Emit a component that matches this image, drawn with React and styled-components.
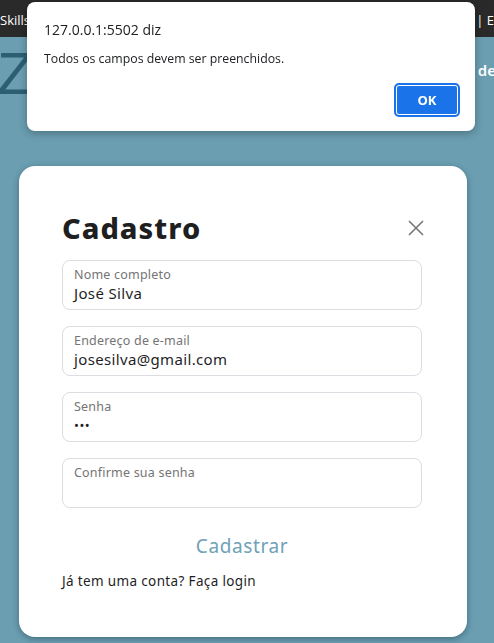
import React from "react";
import styled, { createGlobalStyle } from "styled-components";

const colors = {
    page: "#6b9eb1",
    bar: "#2a2a2a",
    accent: "#6fa1b8",
    ink: "#1f1f1f",
    muted: "#747474",
    line: "#dcdde3",
};

const FIELDS = [
    { id: 1, label: "Nome completo", value: "José Silva" },
    { id: 2, label: "Endereço de e-mail", value: "josesilva@gmail.com" },
    { id: 3, label: "Senha", value: "•••", secret: true },
    { id: 4, label: "Confirme sua senha", value: "" },
];

const App = () => {
    return (
        <>
            <GlobalStyle />
            <TopBar>
                <BarText>Skills</BarText>
                <BarText>l | E</BarText>
            </TopBar>
            <Hero>
                <Logo>ZE</Logo>
                <NavLink>de</NavLink>
            </Hero>
            <Card>
                <CardHeader>
                    <CardTitle>Cadastro</CardTitle>
                    <CloseBtn aria-label="Fechar">
                        <svg width="16" height="16" viewBox="0 0 16 16">
                            <path d="M1 1 L15 15 M15 1 L1 15" stroke="#777" strokeWidth="1.6" fill="none" />
                        </svg>
                    </CloseBtn>
                </CardHeader>
                <Fields>
                    {FIELDS.map(item => (
                        <Field key={item.id}>
                            <FieldLabel>{item.label}</FieldLabel>
                            <FieldValue secret={item.secret}>{item.value}</FieldValue>
                        </Field>
                    ))}
                </Fields>
                <SubmitBtn>Cadastrar</SubmitBtn>
                <LoginText>Já tem uma conta? Faça login</LoginText>
            </Card>

            <Alert>
                <AlertTitle>127.0.0.1:5502 diz</AlertTitle>
                <AlertMessage>Todos os campos devem ser preenchidos.</AlertMessage>
                <AlertActions>
                    <OkBtn>OK</OkBtn>
                </AlertActions>
            </Alert>
        </>
    );
};

const GlobalStyle = createGlobalStyle`
    html, body {
        margin: 0;
        padding: 0;
        background-color: ${colors.page};
        height: 100%;
        overflow: hidden;
    }
    body {
        font-family: "Noto Sans", "Open Sans", sans-serif;
    }
`;

export const TopBar = styled.div`
    height: 37px;
    background-color: ${colors.bar};
    display: flex;
    justify-content: space-between;
    align-items: center;
    box-sizing: border-box;
`;
export const BarText = styled.span`
    font-family: "Open Sans", sans-serif;
    font-size: 13px;
    color: #fff;
    margin-top: 2px;
`;
export const Hero = styled.div`
    height: 129px;
    display: flex;
    justify-content: space-between;
    align-items: flex-start;
    overflow: hidden;
`;
export const Logo = styled.h1`
    margin: 7px 0 0 -3px;
    font-family: "Liberation Sans", sans-serif;
    font-weight: 400;
    font-size: 60px;
    letter-spacing: 2px;
    color: #2c5f74;
    line-height: 1;
`;
export const NavLink = styled.a`
    margin-top: 23px;
    font-family: "Noto Sans", sans-serif;
    font-weight: 600;
    font-size: 15px;
    color: #fff;
    margin-right: -2px;
`;

export const Card = styled.div`
    width: 448px;
    margin-left: 19px;
    background-color: #fff;
    border-radius: 16px;
    box-shadow: 0 2px 6px rgba(20, 50, 65, 0.45);
    padding: 40px 45px 47px 43px;
    box-sizing: border-box;
`;
export const CardHeader = styled.div`
    display: flex;
    justify-content: space-between;
    align-items: center;
    height: 42px;
    margin-bottom: 12px;
`;
export const CardTitle = styled.h2`
    margin: 0;
    font-family: "Noto Sans", sans-serif;
    font-weight: 800;
    font-size: 29px;
    letter-spacing: 1px;
    color: ${colors.ink};
`;
export const CloseBtn = styled.button`
    border: none;
    background: none;
    padding: 0;
    margin-right: -2px;
    margin-top: 2px;
    display: flex;
    cursor: pointer;
`;
export const Fields = styled.div`
    display: flex;
    flex-direction: column;
    gap: 16px;
`;
export const Field = styled.div`
    height: 50px;
    border: 1px solid ${colors.line};
    border-radius: 8px;
    padding: 5px 11px;
    box-sizing: border-box;
`;
export const FieldLabel = styled.div`
    font-family: "Noto Sans", sans-serif;
    font-size: 12.5px;
    line-height: 17px;
    letter-spacing: 0.2px;
    color: ${colors.muted};
`;
export const FieldValue = styled.div`
    font-family: "Noto Sans", sans-serif;
    font-size: ${props => (props.secret ? "13px" : "15px")};
    line-height: 20px;
    color: ${colors.ink};
    letter-spacing: ${props => (props.secret ? "0.5px" : "0.35px")};
`;
export const SubmitBtn = styled.button`
    display: block;
    margin: 18px auto 0;
    height: 40px;
    padding: 0 20px;
    border: none;
    background: none;
    font-family: "Noto Sans", sans-serif;
    font-size: 19px;
    letter-spacing: 0.6px;
    color: ${colors.accent};
    cursor: pointer;
`;
export const LoginText = styled.p`
    margin: 6px 0 0;
    font-family: "Noto Sans", sans-serif;
    font-size: 13.5px;
    letter-spacing: 0.35px;
    color: ${colors.ink};
`;

export const Alert = styled.div`
    position: fixed;
    top: 2px;
    left: 27px;
    width: 448px;
    height: 129px;
    box-sizing: border-box;
    background-color: #fff;
    border-radius: 8px;
    box-shadow: 0 2px 8px rgba(0, 0, 0, 0.3);
    padding: 19px 16px 15px 17px;
    display: flex;
    flex-direction: column;
    font-family: "Open Sans", sans-serif;
`;
export const AlertTitle = styled.div`
    font-size: 14px;
    line-height: 18px;
    color: #202124;
`;
export const AlertMessage = styled.div`
    margin-top: 12px;
    font-size: 12.3px;
    line-height: 16px;
    color: #202124;
`;
export const AlertActions = styled.div`
    margin-top: auto;
    display: flex;
    justify-content: flex-end;
`;
export const OkBtn = styled.button`
    width: 64px;
    height: 32px;
    border-radius: 4px;
    border: 1px solid #fff;
    outline: 2px solid #1a73e8;
    outline-offset: -1px;
    box-shadow: inset 0 0 0 1px #fff;
    background-color: #1a73e8;
    color: #fff;
    font-family: "Open Sans", sans-serif;
    font-weight: 700;
    font-size: 13px;
    cursor: pointer;
`;

export default App;
